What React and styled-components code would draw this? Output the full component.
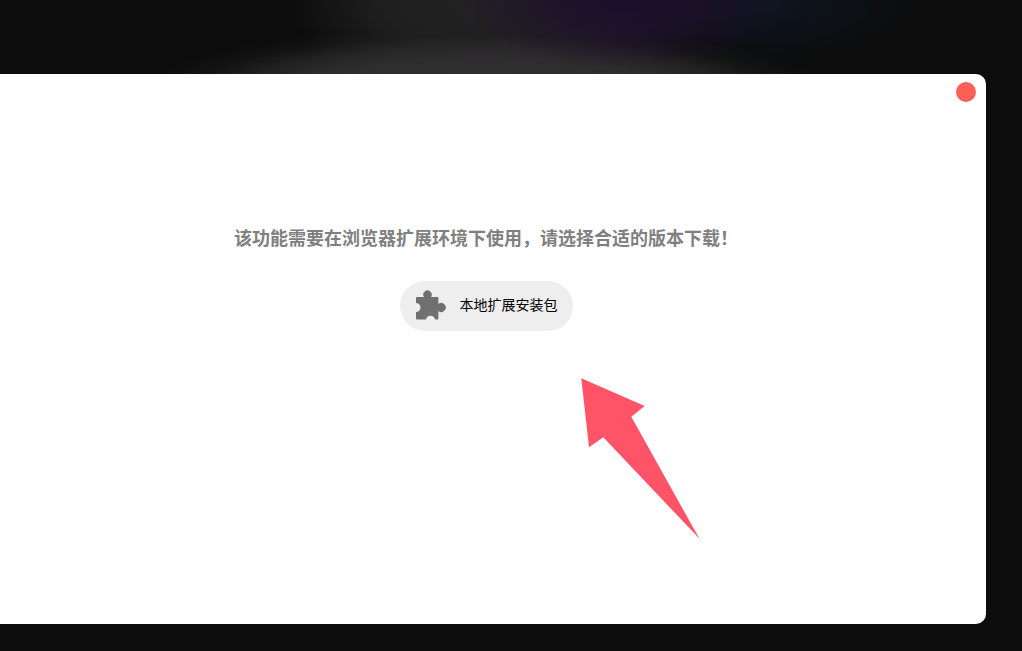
import React from "react";
import styled, { createGlobalStyle } from "styled-components";

const GlobalStyle = createGlobalStyle`
  html, body {
    margin: 0;
    height: 100%;
    background: #0c0c0c;
    overflow: hidden;
  }
  #root {
    height: 100%;
  }
`;

const Page = styled.div`
  position: relative;
  width: 1022px;
  height: 651px;
  overflow: hidden;
  padding-top: 74px;
  box-sizing: border-box;
  font-family: "Liberation Sans", "Noto Sans CJK SC", sans-serif;
  background:
    radial-gradient(ellipse 165px 70px at 625px 0, #1c0e2c 0%, rgba(30, 16, 44, 0.8) 40%, rgba(34, 20, 44, 0) 100%),
    radial-gradient(ellipse 150px 65px at 765px 0, #0d1622 0%, rgba(13, 22, 34, 0) 100%),
    radial-gradient(ellipse 345px 66px at 485px 92px, #323032 0%, #2e2c2e 52%, rgba(42, 42, 42, 0.8) 68%, rgba(32, 32, 32, 0.35) 85%, rgba(28, 28, 28, 0) 100%),
    radial-gradient(ellipse 215px 100px at 500px 0, #232223 0%, #201f20 55%, rgba(32, 32, 32, 0) 100%),
    #0c0c0c;
`;

const Modal = styled.section`
  width: 1000px;
  height: 550px;
  margin-left: -14px;
  box-sizing: border-box;
  padding: 8px 10px 0 0;
  background: #fff;
  border-radius: 10px;
  display: flex;
  flex-direction: column;
  align-items: center;
`;

const CloseDot = styled.button`
  align-self: flex-end;
  width: 20px;
  height: 20px;
  padding: 0;
  border: 0;
  border-radius: 50%;
  background: #ff5f57;
`;

const Message = styled.h2`
  margin: 123px 0 0 10px;
  height: 28px;
  line-height: 28px;
  font-size: 18px;
  font-weight: 700;
  color: #808080;
`;

const DownloadButton = styled.button`
  margin: 28px 0 0 10px;
  width: 173px;
  height: 50px;
  padding: 0 0 0 10px;
  box-sizing: border-box;
  border: 0;
  border-radius: 25px;
  background: #eee;
  display: flex;
  align-items: center;
  gap: 10px;
  font-family: inherit;
  font-size: 14px;
  color: #000;
`;

const Label = styled.span`
  padding-bottom: 4px;
`;

const PuzzleIcon = styled.svg`
  width: 40px;
  height: 40px;
  flex: none;
  fill: #707070;
`;

const Arrow = styled.svg`
  position: absolute;
  left: 575px;
  top: 372px;
  width: 130px;
  height: 172px;
`;

export default function App() {
  return (
    <Page>
      <GlobalStyle />
      <Modal>
        <CloseDot aria-label="关闭" />
        <Message>该功能需要在浏览器扩展环境下使用，请选择合适的版本下载！</Message>
        <DownloadButton>
          <PuzzleIcon viewBox="0 0 40 40">
            <path d="M7 11 H14 A4.2 4.2 0 1 1 21 11 H27.4 Q28.4 11 28.4 12 V18 A4.5 4.5 0 1 1 28.4 25 V32.4 Q28.4 33.4 27.4 33.4 H25 A4.6 4.6 0 0 0 16 33.4 H7 Q6 33.4 6 32.4 V26 A4.2 4.2 0 0 0 6 17 V12 Q6 11 7 11 Z" />
          </PuzzleIcon>
          <Label>本地扩展安装包</Label>
        </DownloadButton>
      </Modal>
      <Arrow viewBox="575 372 130 172">
        <polygon
          points="581.3,378.3 644.7,406 631.3,416.7 699.3,538.6 603.3,437.3 589,447.3"
          fill="#ff5367"
        />
      </Arrow>
    </Page>
  );
}
